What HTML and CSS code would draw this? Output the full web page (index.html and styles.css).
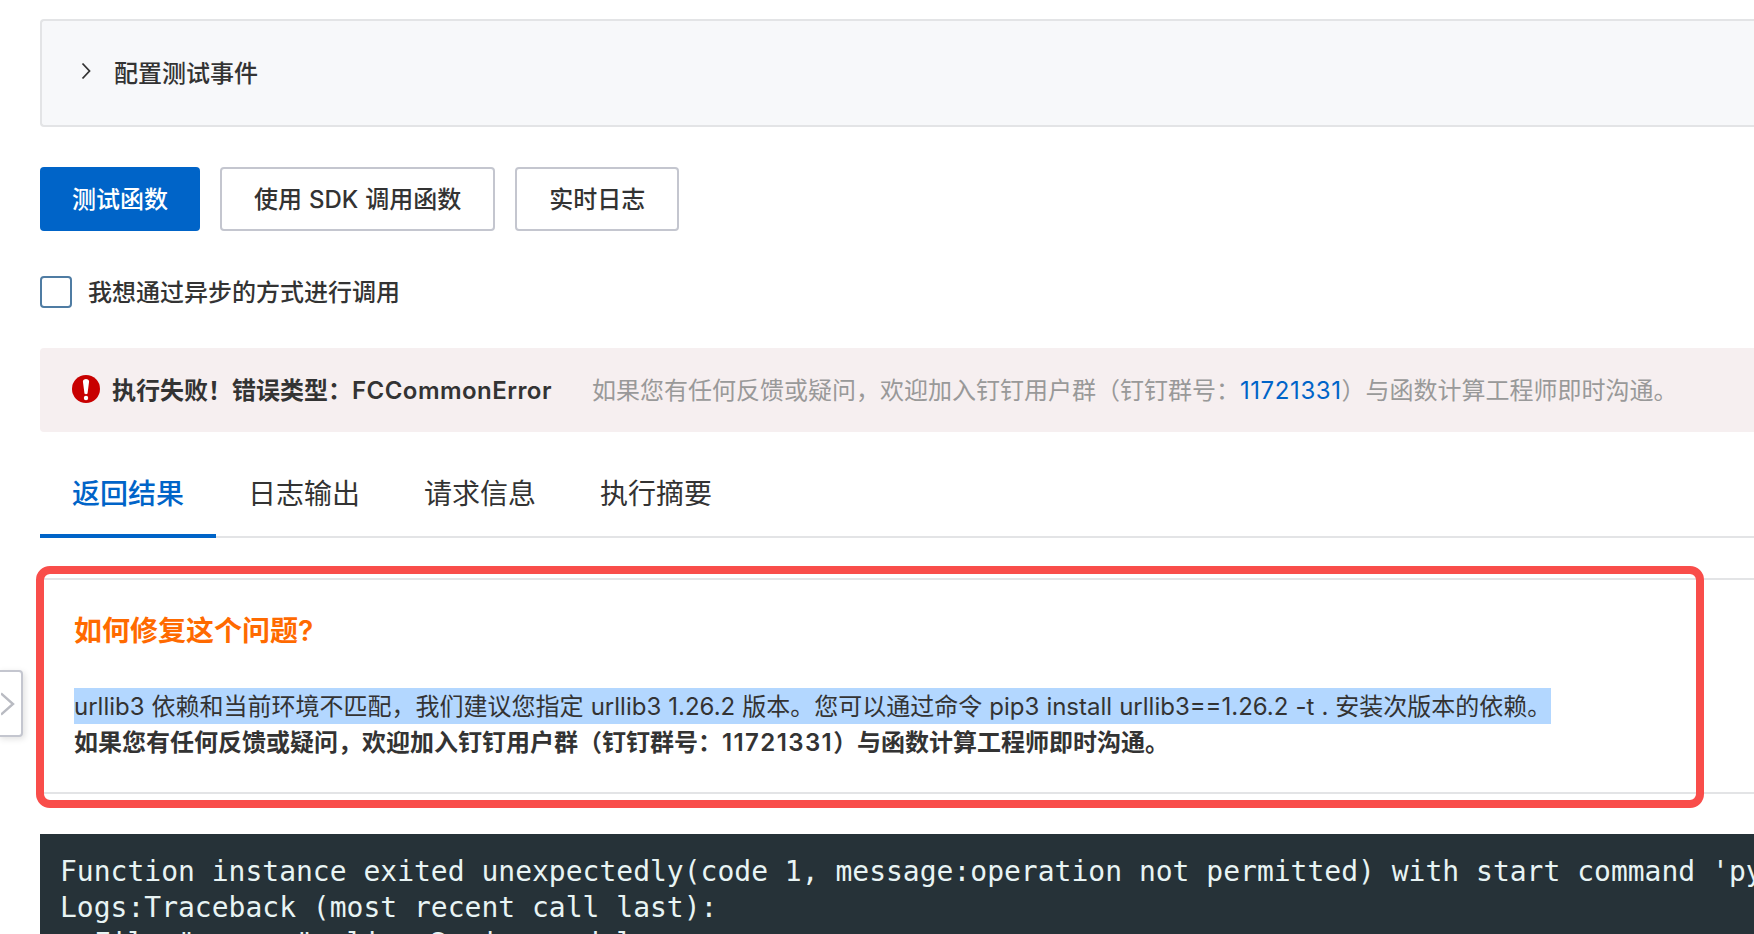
FILE: index.html
```html
<!DOCTYPE html>
<html lang="zh-CN">
<head>
<meta charset="utf-8">
<title>测试函数</title>
<link rel="stylesheet" href="styles.css">
</head>
<body>
<main class="page">
  <section class="panel">
    <svg class="panel-arrow" viewBox="0 0 10 18"><path d="M1.500 1.500 8.500 9l-7 7.500"/></svg>
    <span class="panel-title">配置测试事件</span>
  </section>
  <div class="actions">
    <button class="btn btn-primary">测试函数</button>
    <button class="btn">使用 SDK 调用函数</button>
    <button class="btn">实时日志</button>
  </div>
  <label class="check"><span class="check-box"></span><span class="check-label">我想通过异步的方式进行调用</span></label>
  <div class="alert">
    <svg class="alert-icon" viewBox="0 0 28 28"><circle class="alert-disc" cx="14" cy="14" r="14"/><path class="alert-mark" d="M10.900 6.600c0-1.600 1.300-2.600 3.100-2.600s3.100 1 3.100 2.600l-1.500 11.400c-.1.800-.7 1.200-1.600 1.200s-1.500-.4-1.600-1.200z"/><circle class="alert-mark" cx="14" cy="23" r="2.200"/></svg>
    <strong class="alert-title">执行失败！错误类型：<span class="alert-code">FCCommonError</span></strong>
    <span class="alert-note">如果您有任何反馈或疑问，欢迎加入钉钉用户群（钉钉群号：<a class="link">11721331</a>）与函数计算工程师即时沟通。</span>
  </div>
  <nav class="tabs">
    <span class="tab tab-active">返回结果</span>
    <span class="tab">日志输出</span>
    <span class="tab">请求信息</span>
    <span class="tab">执行摘要</span>
  </nav>
  <section class="fix">
    <h2 class="fix-title">如何修复这个问题?</h2>
    <p class="fix-line selected">urllib3 依赖和当前环境不匹配，我们建议您指定 urllib3 1.26.2 版本。您可以通过命令 pip3 install urllib3==1.26.2 -t . 安装次版本的依赖。</p>
    <p class="fix-line fix-bold">如果您有任何反馈或疑问，欢迎加入钉钉用户群（钉钉群号：<span class="fix-num">11721331</span>）与函数计算工程师即时沟通。</p>
    <div class="highlight"></div>
  </section>
  <pre class="console">Function instance exited unexpectedly(code 1, message:operation not permitted) with start command 'python3 index.py'.
Logs:Traceback (most recent call last):
  File "app.py", line 2, in &lt;module&gt;</pre>
</main>
<div class="side-toggle"><svg viewBox="0 0 14 24"><path d="M0 1.500 12 12 0 22.500"/></svg></div>
</body>
</html>
```
FILE: styles.css
```css
html, body { margin: 0; height: 100%; overflow: hidden; background: #fff; }
body { font-family: Inter, "Noto Sans CJK SC", sans-serif; color: #333; font-size: 24px; }
.page { padding: 19px 0 0 40px; }
.panel { height: 108px; box-sizing: border-box; border: 2px solid #e3e4e6; border-right: 0; border-radius: 4px 0 0 4px; background: #f7f8fa; display: flex; align-items: center; padding-left: 39px; }
.panel-arrow { width: 10px; height: 18px; margin-right: 23px; margin-top: -5px; fill: none; stroke: #333; stroke-width: 1.800; }
.panel-title { font-weight: 500; line-height: 32px; padding-top: 2px; }
.actions { display: flex; gap: 20px; margin-top: 40px; }
.btn { height: 64px; box-sizing: border-box; padding: 0 32px 4px; border: 2px solid #c4c6cf; border-radius: 4px; background: #fff; color: #333; font: 500 24px Inter, "Noto Sans CJK SC", sans-serif; word-spacing: .6px; }
.btn-primary { background: #0064c8; border: 0; color: #fff; }
.check { display: flex; align-items: center; gap: 16px; margin-top: 45px; height: 32px; font-size: 24px; font-weight: 500; }
.check-box { width: 32px; height: 32px; box-sizing: border-box; border: 2px solid #4f7ca3; border-radius: 4px; background: #fff; }
.check-label { padding-bottom: 4px; }
.alert { display: flex; align-items: center; height: 84px; margin-top: 40px; padding-left: 32px; background: #f6eff0; border-radius: 4px 0 0 4px; white-space: nowrap; }
.alert-icon { width: 28px; height: 28px; margin: 0 12px 2px 0; }
.alert-disc { fill: #c80000; }
.alert-mark { fill: #fff; }
.alert-title { font-weight: 600; margin-right: 40px; padding-bottom: 4px; }
.alert-code { letter-spacing: .45px; }
.alert-note { color: #999; padding-bottom: 4px; }
.link { color: #0064c8; letter-spacing: .6px; }
.tabs { display: flex; height: 106px; border-bottom: 2px solid #e3e4e6; box-sizing: border-box; }
.tab { position: relative; width: 176px; box-sizing: border-box; text-align: center; font-size: 28px; line-height: 124px; }
.tab-active { color: #0064c8; font-weight: 500; }
.tab-active::after { content: ""; position: absolute; left: 0; right: 0; bottom: -2px; height: 4px; background: #0064c8; }
.fix { position: relative; margin-top: 40px; height: 216px; box-sizing: border-box; border-top: 2px solid #e3e4e6; border-bottom: 2px solid #e3e4e6; padding: 32px 0 0 34px; }
.fix-title { margin: 0 0 40px; padding-top: 2px; height: 34px; color: #ff6a00; font-size: 28px; font-weight: 600; line-height: 34px; }
.fix-line { margin: 0; padding-top: 2px; line-height: 34px; white-space: nowrap; }
.fix-bold { font-weight: 600; }
.fix-num { letter-spacing: 1.400px; }
.selected { background: #b3d7ff; width: fit-content; word-spacing: .3px; }
.highlight { position: absolute; left: -4px; top: -14px; width: 1668px; height: 242px; box-sizing: border-box; border: 8px solid #f94d4a; border-radius: 14px; }
.console { margin: 40px 0 0; height: 200px; padding: 20px 0 0 20px; background: #263238; color: #e8f4f4; font: 28px/36px "DejaVu Sans Mono", monospace; white-space: pre; overflow: hidden; }
.side-toggle { position: absolute; left: -2px; top: 670px; width: 25px; height: 67px; box-sizing: border-box; border: 2px solid #c4c6cf; border-radius: 0 4px 4px 0; background: #fff; box-shadow: 2px 2px 6px rgba(0,0,0,.12); display: flex; align-items: center; }
.side-toggle svg { width: 14px; height: 24px; margin-left: 1px; fill: none; stroke: #b9bbc2; stroke-width: 2.400; }
```
